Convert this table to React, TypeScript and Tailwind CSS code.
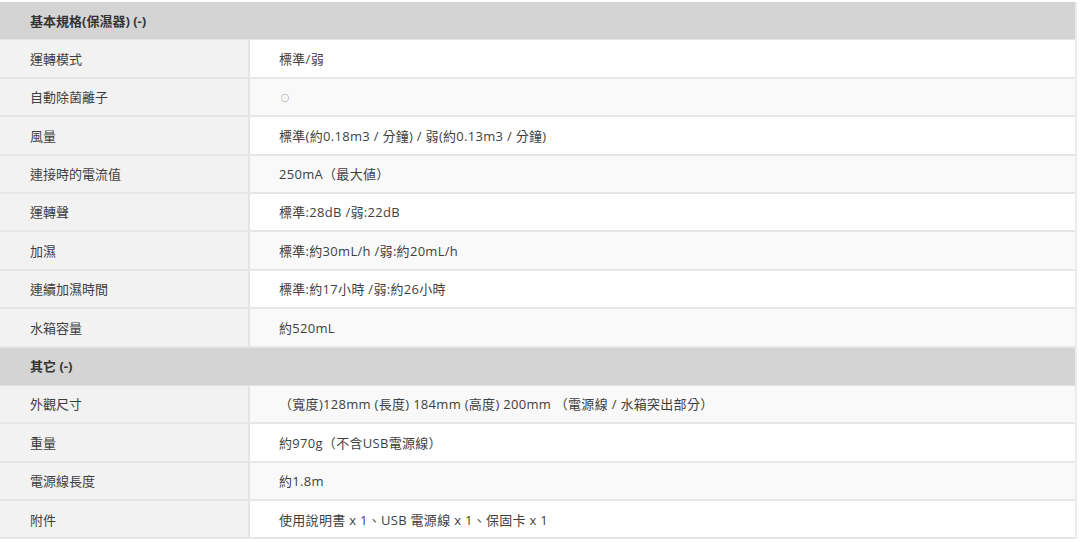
const rows: (string | [string, string])[] = [
  "基本規格(保濕器) (-)",
  ["運轉模式", "標準/弱"],
  ["自動除菌離子", "○"],
  ["風量", "標準(約0.18m3 / 分鐘) / 弱(約0.13m3 / 分鐘)"],
  ["連接時的電流值", "250mA（最大値）"],
  ["運轉聲", "標準:28dB /弱:22dB"],
  ["加濕", "標準:約30mL/h /弱:約20mL/h"],
  ["連續加濕時間", "標準:約17小時 /弱:約26小時"],
  ["水箱容量", "約520mL"],
  "其它 (-)",
  ["外觀尺寸", "（寬度)128mm (長度) 184mm (高度) 200mm （電源線 / 水箱突出部分）"],
  ["重量", "約970g（不含USB電源線）"],
  ["電源線長度", "約1.8m"],
  ["附件", "使用說明書 x 1、USB 電源線 x 1、保固卡 x 1"],
]

export default function App() {
  return (
    <div
      className="w-[1080px] h-[542px] bg-white pt-[2px] text-[13px] text-[#3f3f3f]"
      style={{ fontFamily: '"Open Sans", "Noto Sans CJK TC", sans-serif' }}
    >
      <div className="w-[1077px] border-r-2 border-[#ececec]">
        {rows.map((row, i) =>
          typeof row === "string" ? (
            <div
              key={i}
              className="h-[38.4px] flex items-center pl-[30px] pt-[2px] bg-[#d4d4d5] font-bold text-[#333] border-b border-[#e2e2e2]"
            >
              {row}
            </div>
          ) : (
            <div key={i} className="h-[38.4px] flex border-b-2 border-[#e6e6e6]">
              <div className="w-[250px] shrink-0 flex items-center pl-[30px] pt-[2px] bg-[#f2f2f2] border-r-2 border-[#e4e4e4]">
                {row[0]}
              </div>
              <div
                className={`flex-1 flex items-center pl-[29px] pt-[2px] tracking-[0.3px] ${
                  i % 2 === 1 ? "bg-white" : "bg-[#f9f9f9]"
                }`}
              >
                {row[1] === "○" ? <span className="text-[8px] pl-[2px]">{row[1]}</span> : row[1]}
              </div>
            </div>
          )
        )}
      </div>
    </div>
  )
}
